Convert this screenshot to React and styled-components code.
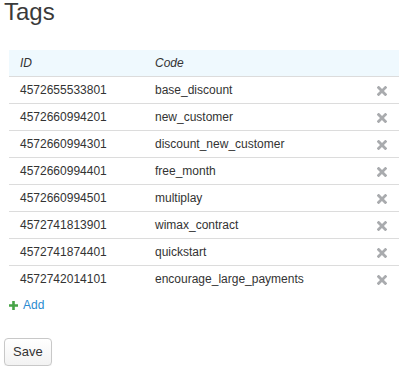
import React from "react";
import styled, { createGlobalStyle } from "styled-components";

const Global = createGlobalStyle`
  html, body { margin: 0; padding: 0; background: #fff; }
  body { font-family: "Liberation Sans", Arial, sans-serif; color: #333; overflow: hidden; }
`;

const Page = styled.div`
  width: 399px;
  padding: 0 0 0 4px;
  box-sizing: border-box;
`;

const Title = styled.h1`
  margin: 0;
  font-size: 24px;
  line-height: 24px;
  font-weight: normal;
  color: #3a3a3a;
`;

const Table = styled.table`
  margin: 26px 0 0 5px;
  width: 390px;
  border-collapse: collapse;
  font-size: 12px;
  line-height: 16px;
  table-layout: fixed;
`;

const Th = styled.th`
  text-align: left;
  font-weight: normal;
  font-style: italic;
  background: #eff9fe;
  padding: 5px 11px;
  box-sizing: border-box;
  width: ${(p) => p.$w || "auto"};
`;

const Tr = styled.tr`
  border-top: 1px solid #dcdcdc;
`;

const Td = styled.td`
  padding: 5px 11px;
  text-align: ${(p) => (p.$right ? "right" : "left")};
  padding-right: ${(p) => (p.$right ? "12px" : "11px")};
  white-space: nowrap;
`;

const IconCell = styled.span`
  display: inline-flex;
  vertical-align: middle;
  cursor: pointer;
`;

const AddLink = styled.a`
  display: flex;
  align-items: center;
  gap: 5px;
  margin: 5px 0 0 5px;
  font-size: 12px;
  line-height: 16px;
  color: #2a8ad0;
  text-decoration: none;
`;

const SaveButton = styled.button`
  margin-top: 25px;
  font-family: "Liberation Sans", Arial, sans-serif;
  font-size: 13px;
  line-height: 18px;
  padding: 4px 8px;
  color: #333;
  background: linear-gradient(#fff, #f2f2f2);
  border: 1px solid #c8c8c8;
  border-radius: 4px;
  box-shadow: 0 1px 1px rgba(0,0,0,0.05);
`;

const RemoveIcon = () => (
  <svg width="10" height="10" viewBox="0 0 10 10">
    <path d="M1.6 1.6 L8.4 8.4 M8.4 1.6 L1.6 8.4" stroke="#a9abae" strokeWidth="2.8" strokeLinecap="square" />
  </svg>
);

const PlusIcon = () => (
  <svg width="9" height="9" viewBox="0 0 9 9">
    <path d="M4.5 0 V9 M0 4.5 H9" stroke="#47a447" strokeWidth="2.6" />
  </svg>
);

const rows = [
  ["4572655533801", "base_discount"],
  ["4572660994201", "new_customer"],
  ["4572660994301", "discount_new_customer"],
  ["4572660994401", "free_month"],
  ["4572660994501", "multiplay"],
  ["4572741813901", "wimax_contract"],
  ["4572741874401", "quickstart"],
  ["4572742014101", "encourage_large_payments"],
];

export default function App() {
  return (
    <>
      <Global />
      <Page>
        <Title>Tags</Title>
        <Table>
          <thead>
            <tr>
              <Th $w="135px">ID</Th>
              <Th>Code</Th>
              <Th $w="34px"></Th>
            </tr>
          </thead>
          <tbody>
            {rows.map(([id, code]) => (
              <Tr key={id}>
                <Td>{id}</Td>
                <Td>{code}</Td>
                <Td $right>
                  <IconCell><RemoveIcon /></IconCell>
                </Td>
              </Tr>
            ))}
          </tbody>
        </Table>
        <AddLink href="#">
          <PlusIcon />
          Add
        </AddLink>
        <SaveButton>Save</SaveButton>
      </Page>
    </>
  );
}
